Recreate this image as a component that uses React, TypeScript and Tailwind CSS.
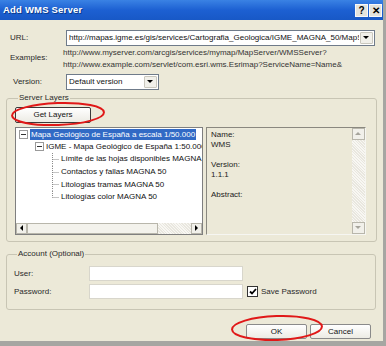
import React from "react";

function Arrow({ dir, color = "#000" }: { dir: "up" | "down" | "left" | "right"; color?: string }) {
  const pts =
    dir === "down" ? "0,0 6,0 3,3" : dir === "up" ? "0,3 6,3 3,0" : dir === "left" ? "3,0 3,6 0,3" : "0,0 0,6 3,3";
  const w = dir === "down" || dir === "up" ? 7 : 4;
  const h = dir === "down" || dir === "up" ? 4 : 7;
  return (
    <svg width={w} height={h} viewBox={`0 0 ${w} ${h}`}>
      <polygon points={pts} fill={color} />
    </svg>
  );
}

function Combo({ text, className }: { text: string; className: string }) {
  return (
    <div className={`flex items-stretch bg-white border border-[#6f7b8a] ${className}`}>
      <div className="flex-1 overflow-hidden whitespace-nowrap pl-[2px] leading-[14px] text-[#111]">{text}</div>
      <div className="w-[13px] m-[1px] flex items-center justify-center bg-[#f1f0ea] border border-[#c9c7bd] rounded-[1px]">
        <Arrow dir="down" />
      </div>
    </div>
  );
}

function ExpandBox() {
  return (
    <div className="w-[9px] h-[9px] border border-[#9a9a9a] bg-white flex items-center justify-center shrink-0">
      <div className="w-[5px] h-[1px] bg-[#333]" />
    </div>
  );
}

function Gutter({ last }: { last?: boolean }) {
  return (
    <svg width="13" height="12.6" viewBox="0 0 13 12.6" className="shrink-0">
      <line x1="5.5" y1="0" x2="5.5" y2={last ? 6.5 : 12.6} stroke="#8a8a8a" strokeWidth="1" strokeDasharray="1 1" />
      <line x1="5.5" y1="6.5" x2="12" y2="6.5" stroke="#8a8a8a" strokeWidth="1" strokeDasharray="1 1" />
    </svg>
  );
}

function XPButton({ label, className }: { label: string; className: string }) {
  return (
    <div
      className={`flex items-center justify-center border border-[#3a3a3a] rounded-[2px] bg-gradient-to-b from-[#ffffff] to-[#ecebe4] text-[#111] ${className}`}
    >
      {label}
    </div>
  );
}

export default function App() {
  return (
    <div className="relative w-[386px] h-[346px] overflow-hidden flex flex-col bg-[#ece9d8] border-r-[3px] border-b-[5px] border-[#a6a6a2] font-['Liberation_Sans',Arial,sans-serif] text-[8px] text-[#2a2a2a]">
      {/* Title bar */}
      <div className="h-[20px] shrink-0 flex items-center justify-between pl-[3px] pr-[1px] bg-gradient-to-b from-[#3a82e4] via-[#1d60d2] to-[#1858c6]">
        <span className="text-white font-bold text-[9.5px] tracking-[0.2px] [text-shadow:1px_1px_0_#0a3a8a]">Add WMS Server</span>
        <div className="flex gap-[1px] mt-[1px]">
          <div className="w-[13px] h-[13px] bg-[#e4e3dc] border border-[#f8f8f8] flex items-center justify-center font-bold text-[10px] leading-none text-black">?</div>
          <div className="w-[13px] h-[13px] bg-[#e4e3dc] border border-[#f8f8f8] flex items-center justify-center font-bold text-[10px] leading-none text-black">✕</div>
        </div>
      </div>

      {/* URL */}
      <div className="flex items-center mt-[10px] h-[16px]">
        <div className="w-[66px] pl-[10px]">URL:</div>
        <Combo text="http://mapas.igme.es/gis/services/Cartografia_Geologica/IGME_MAGNA_50/MapServer/WMSServer" className="w-[309px] h-[16px]" />
      </div>

      {/* Examples */}
      <div className="flex mt-[1px]">
        <div className="w-[63px] pl-[10px] pt-[5px]">Examples:</div>
        <div className="leading-[12px] whitespace-nowrap text-[#333]">
          <div>http://www.myserver.com/arcgis/services/mymap/MapServer/WMSServer?</div>
          <div>http://www.example.com/servlet/com.esri.wms.Esrimap?ServiceName=Name&amp;</div>
        </div>
      </div>

      {/* Version */}
      <div className="flex items-center mt-[3px] h-[16px]">
        <div className="w-[66px] pl-[13px]">Version:</div>
        <Combo text="Default version" className="w-[93px] h-[16px]" />
      </div>

      {/* Server Layers */}
      <fieldset className="ml-[6px] w-[371px] mt-[3px] border border-[#c8c5b4] rounded-[3px] px-[8px] pb-[6px]">
        <legend className="ml-[3px] px-[1px] leading-[10px]">Server Layers</legend>
        <XPButton label="Get Layers" className="w-[76px] h-[16px] mt-[4px]" />
        <div className="flex mt-[4px] gap-[3px]">
          {/* Tree */}
          <div className="w-[188px] h-[108px] bg-white border border-[#7f7f7f] flex flex-col">
            <div className="flex-1 overflow-hidden whitespace-nowrap text-[#111]">
              <div className="h-[12.6px] flex items-center pl-[3px]">
                <ExpandBox />
                <span className="ml-[2px] px-[1px] bg-[#316ac5] text-white leading-[11px]">Mapa Geológico de España a escala 1/50.000</span>
              </div>
              <div className="h-[12.6px] flex items-center pl-[19px]">
                <ExpandBox />
                <span className="ml-[2px]">IGME - Mapa Geológico de España 1:50.000</span>
              </div>
              {[
                "Límite de las hojas disponibles MAGNA 50",
                "Contactos y fallas MAGNA 50",
                "Litologías tramas MAGNA 50",
                "Litologías color MAGNA 50",
              ].map((t, i) => (
                <div key={t} className="h-[12.6px] flex items-center pl-[31px]">
                  <Gutter last={i === 3} />
                  <span className="ml-[1px]">{t}</span>
                </div>
              ))}
            </div>
            {/* horizontal scrollbar */}
            <div className="h-[11px] flex bg-[#f4f3ee]">
              <div className="w-[11px] flex items-center justify-center bg-[#f1f0ea] border border-[#b8b6ab]">
                <Arrow dir="left" />
              </div>
              <div className="w-[131px] bg-[#f3f2ec] border border-[#b8b6ab]" />
              <div className="flex-1 bg-[repeating-linear-gradient(45deg,#e9e7df_0_1px,#f8f7f3_1px_2px)]" />
              <div className="w-[11px] flex items-center justify-center bg-[#f1f0ea] border border-[#b8b6ab]">
                <Arrow dir="right" />
              </div>
            </div>
          </div>
          {/* Info */}
          <div className="w-[160px] h-[108px] border border-[#8a887f] border-r-[#f6f6f2] border-b-[#f6f6f2] flex">
            <div className="flex-1 pl-[4px] pt-[2px] leading-[10px] text-[#222]">
              <div>Name:</div>
              <div>WMS</div>
              <div className="h-[10px]" />
              <div>Version:</div>
              <div>1.1.1</div>
              <div className="h-[10px]" />
              <div>Abstract:</div>
            </div>
            <div className="w-[13px] flex flex-col bg-[repeating-linear-gradient(45deg,#e9e7df_0_1px,#f8f7f3_1px_2px)]">
              <div className="h-[12px] flex items-center justify-center bg-[#f1f0ea] border border-[#b8b6ab]">
                <Arrow dir="up" color="#a6a49b" />
              </div>
              <div className="flex-1" />
              <div className="h-[12px] flex items-center justify-center bg-[#f1f0ea] border border-[#b8b6ab]">
                <Arrow dir="down" color="#a6a49b" />
              </div>
            </div>
          </div>
        </div>
      </fieldset>

      {/* Account */}
      <fieldset className="ml-[6px] w-[370px] mt-[7px] border border-[#c8c5b4] rounded-[3px] pl-[7px] pb-[10px]">
        <legend className="ml-[3px] px-[1px] leading-[10px]">Account (Optional)</legend>
        <div className="flex items-center mt-[7px] h-[15px]">
          <div className="w-[75px]">User:</div>
          <div className="w-[154px] h-[15px] bg-white border border-[#d8d6cc]" />
        </div>
        <div className="flex items-center mt-[3px] h-[15px]">
          <div className="w-[75px]">Password:</div>
          <div className="w-[154px] h-[15px] bg-white border border-[#d8d6cc]" />
          <div className="ml-[4px] w-[11px] h-[11px] bg-white border border-[#333] flex items-center justify-center">
            <svg width="8" height="7" viewBox="0 0 8 7">
              <polyline points="1,3.5 3,5.5 7,1" fill="none" stroke="#000" strokeWidth="1.8" />
            </svg>
          </div>
          <span className="ml-[3px]">Save Password</span>
        </div>
      </fieldset>

      {/* Buttons */}
      <div className="flex justify-end gap-[3px] mt-[14px] pr-[12px]">
        <XPButton label="OK" className="w-[61px] h-[15px] border-[#8a8a8a]" />
        <XPButton label="Cancel" className="w-[61px] h-[15px] border-[#8a8a8a]" />
      </div>

      {/* Red annotation ellipses */}
      <svg className="absolute left-0 top-0 pointer-events-none" width="386" height="346" viewBox="0 0 386 346">
        <ellipse cx="58" cy="114" rx="46" ry="11" fill="none" stroke="#e01818" strokeWidth="2" transform="rotate(-2 58 114)" />
        <ellipse cx="277" cy="328" rx="45" ry="12" fill="none" stroke="#e01818" strokeWidth="2" transform="rotate(-2 277 328)" />
      </svg>
    </div>
  );
}
